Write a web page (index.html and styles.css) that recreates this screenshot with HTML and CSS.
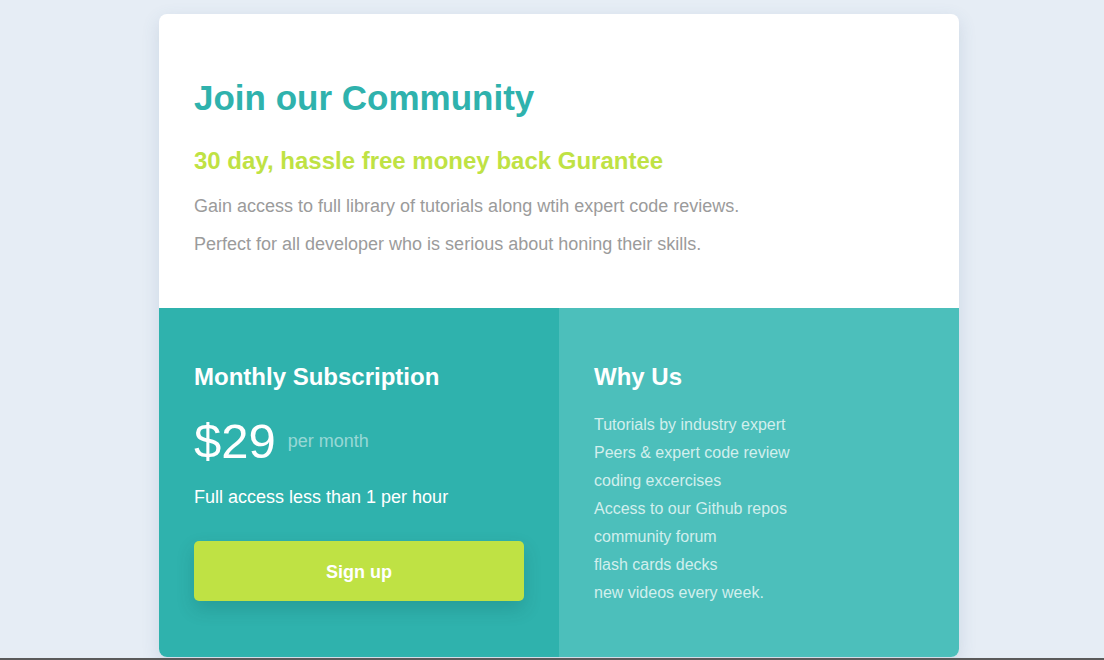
FILE: index.html
```html
<!DOCTYPE html>
<html lang="en">
<head>
<meta charset="utf-8">
<title>Join our Community</title>
<link rel="stylesheet" href="styles.css">
</head>
<body>
  <main class="card">
    <section class="intro">
      <h1 class="title">Join our Community</h1>
      <h2 class="subtitle">30 day, hassle free money back Gurantee</h2>
      <p class="text">Gain access to full library of tutorials along wtih expert code reviews.</p>
      <p class="text">Perfect for all developer who is serious about honing their skills.</p>
    </section>
    <section class="bottom">
      <div class="subscription">
        <h2 class="col-title">Monthly Subscription</h2>
        <div class="price-row">
          <span class="price">$29</span>
          <span class="per">per month</span>
        </div>
        <p class="access">Full access less than 1 per hour</p>
        <button class="signup">Sign up</button>
      </div>
      <div class="why">
        <h2 class="col-title">Why Us</h2>
        <ul class="why-list">
          <li>Tutorials by industry expert</li>
          <li>Peers &amp; expert code review</li>
          <li>coding excercises</li>
          <li>Access to our Github repos</li>
          <li>community forum</li>
          <li>flash cards decks</li>
          <li>new videos every week.</li>
        </ul>
      </div>
    </section>
  </main>
</body>
</html>
```
FILE: styles.css
```css
* { box-sizing: border-box; }

html, body { height: 100%; }

body {
  margin: 0;
  padding: 14px 0 0 14px;
  background: #e6edf5;
  font-family: "Liberation Sans", Arial, Helvetica, sans-serif;
  border-bottom: 2px solid #5a5a5a;
  overflow: hidden;
}

.card {
  width: 800px;
  margin: 0 auto;
  background: #fff;
  border-radius: 8px;
  overflow: hidden;
  box-shadow: 0 6px 18px rgba(70, 100, 140, 0.16);
}

.intro {
  padding: 64px 35px 52px;
}

.title {
  margin: 0 0 29px;
  font-size: 35px;
  line-height: 40px;
  font-weight: 700;
  color: #2fb2ad;
}

.subtitle {
  margin: 0 0 19px;
  font-size: 24px;
  line-height: 28px;
  font-weight: 700;
  color: #bfe244;
}

.text {
  margin: 0;
  font-size: 18px;
  line-height: 24px;
  color: #9b9b9b;
}

.text + .text { margin-top: 14px; }

.bottom {
  display: grid;
  grid-template-columns: 1fr 1fr;
  color: #fff;
}

.subscription {
  background: #2fb2ad;
  padding: 55px 35px 56px;
}

.why {
  background: #4cbfbb;
  padding: 55px 35px 40px;
}

.col-title {
  margin: 0;
  font-size: 24px;
  line-height: 28px;
  font-weight: 700;
  color: #fff;
}

.price-row {
  display: flex;
  align-items: center;
  gap: 12px;
  margin-top: 22px;
}

.price {
  font-size: 49px;
  line-height: 56px;
}

.per {
  font-size: 18px;
  line-height: 24px;
  color: rgba(255, 255, 255, 0.5);
}

.access {
  margin: 16px 0 0;
  font-size: 18px;
  line-height: 24px;
}

.signup {
  display: block;
  width: 100%;
  height: 60px;
  margin-top: 32px;
  padding: 3px 0 0;
  border: 0;
  border-radius: 5px;
  background: #bfe244;
  color: #fff;
  font-family: inherit;
  font-size: 18px;
  font-weight: 700;
  box-shadow: 0 8px 18px rgba(0, 60, 60, 0.18);
  cursor: pointer;
}

.why-list {
  list-style: none;
  margin: 20px 0 0;
  padding: 0;
  font-size: 16px;
  line-height: 28px;
  color: rgba(255, 255, 255, 0.75);
}
```
